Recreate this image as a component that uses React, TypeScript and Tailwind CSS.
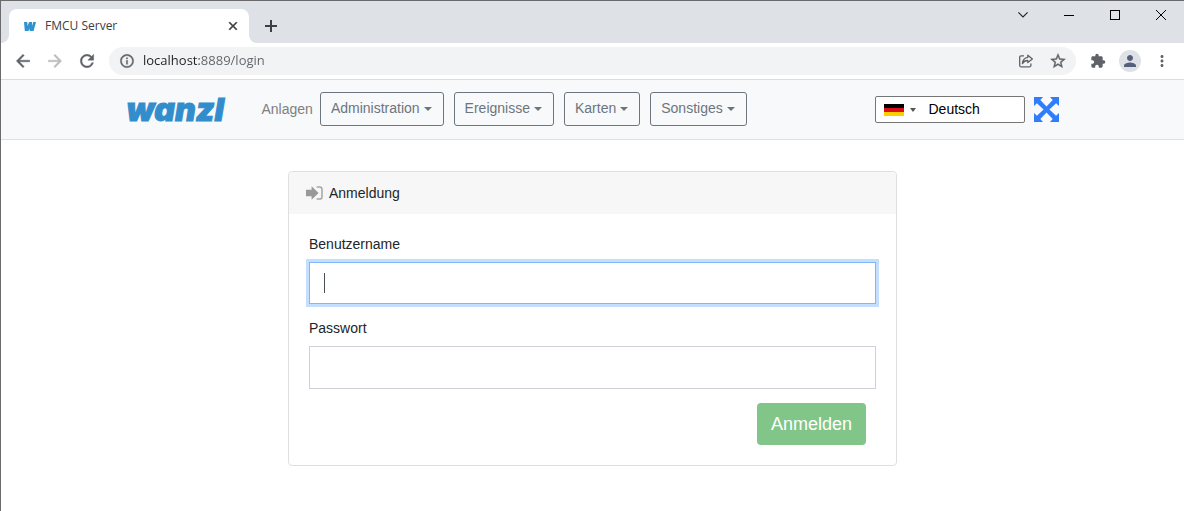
import React from "react";
import {
  MdArrowBack,
  MdArrowForward,
  MdClose,
  MdExtension,
  MdInfoOutline,
  MdMoreVert,
  MdPerson,
  MdRefresh,
  MdStarBorder,
} from "react-icons/md";

const menus = ["Administration", "Ereignisse", "Karten", "Sonstiges"];

function Favicon() {
  return (
    <svg viewBox="0 0 12 9" className="h-[9px] w-3" fill="#2f93cf" aria-hidden="true">
      <path d="M0 0H3.4L3.4 4 5.2 0H8L8 4 9.2 0H12L9.6 9H5.6L5.4 6.4 4.4 9H.8z" />
    </svg>
  );
}

function ShareIcon() {
  return (
    <svg viewBox="0 0 16 16" className="size-4" fill="none" stroke="#5f6368" strokeWidth="1.3" aria-hidden="true">
      <path d="M6 2.8H3.2Q1.7 2.8 1.7 4.3V12.4Q1.7 13.9 3.2 13.9H11.4Q12.9 13.9 12.9 12.4V10.5" />
      <path d="M9.8 2.2 14.4 5.9 9.8 9.6V7.5Q6.2 7.4 4.4 10.6 4.8 5.2 9.8 4.4Z" strokeLinejoin="round" />
    </svg>
  );
}

function TabStrip() {
  return (
    <div className="flex h-[42px] items-start justify-between bg-[#dee1e6]">
      <div className="flex pt-2">
        <div className="flex w-2 items-end self-stretch">
          <svg viewBox="0 0 8 8" className="size-2" fill="#fff" aria-hidden="true">
            <path d="M8 0V8H0A8 8 0 0 0 8 0Z" />
          </svg>
        </div>
        <div className="flex h-[34px] w-60 items-center rounded-t-lg bg-white pr-2 pl-[15px]">
          <Favicon />
          <span className="ml-[9px] flex-1 text-xs text-[#3c4043]">FMCU Server</span>
          <button type="button" aria-label="Tab schließen" className="flex size-4 items-center justify-center">
            <MdClose className="size-[14px] text-[#3c4043] [&>path:last-child]:stroke-1" />
          </button>
        </div>
        <div className="flex w-2 items-end self-stretch">
          <svg viewBox="0 0 8 8" className="size-2" fill="#fff" aria-hidden="true">
            <path d="M0 0V8H8A8 8 0 0 1 0 0Z" />
          </svg>
        </div>
        <button type="button" aria-label="Neuer Tab" className="flex h-[34px] w-7 items-center justify-center">
          <svg viewBox="0 0 12 12" className="size-3" stroke="#3c4043" strokeWidth="2" aria-hidden="true">
            <path d="M6 0V12M0 6H12" />
          </svg>
        </button>
      </div>
      <div className="flex">
        <button type="button" aria-label="Tabs durchsuchen" className="flex h-7 w-[46px] items-center justify-center">
          <svg viewBox="0 0 10 6" className="h-[6px] w-[10px]" fill="none" stroke="#202124" strokeWidth="1.1" aria-hidden="true">
            <path d="M.4 .4 5 5 9.6 .4" />
          </svg>
        </button>
        <button type="button" aria-label="Minimieren" className="flex h-7 w-[46px] items-center justify-center">
          <span className="h-px w-[10px] bg-black" />
        </button>
        <button type="button" aria-label="Maximieren" className="flex h-7 w-[46px] items-center justify-center">
          <span className="size-[10px] border border-black" />
        </button>
        <button type="button" aria-label="Schließen" className="flex h-7 w-[46px] items-center justify-center">
          <svg viewBox="0 0 10 10" className="size-[10px]" stroke="#000" strokeWidth="1" aria-hidden="true">
            <path d="M0 0 10 10M10 0 0 10" />
          </svg>
        </button>
      </div>
    </div>
  );
}

function Toolbar() {
  const button = "flex size-8 items-center justify-center text-[#5f6368]";
  const bold = "[&>path:last-child]:stroke-[0.5]";
  return (
    <div className="flex h-[37px] items-center border-b border-[#dadce0] bg-white px-[6px]">
      <button type="button" aria-label="Zurück" className={button}>
        <MdArrowBack className={`size-5 ${bold}`} />
      </button>
      <button type="button" aria-label="Vorwärts" className={button}>
        <MdArrowForward className={`size-5 text-[#babcbe] ${bold}`} />
      </button>
      <button type="button" aria-label="Neu laden" className={button}>
        <MdRefresh className={`size-5 ${bold}`} />
      </button>
      <div className="mx-[6px] flex h-7 flex-1 items-center rounded-full bg-[#f1f3f4] pr-[2px] pl-[10px]">
        <MdInfoOutline className={`size-4 text-[#5f6368] ${bold}`} />
        <input
          type="text"
          aria-label="Adresse"
          defaultValue="localhost:8889/login"
          className="ml-2 min-w-0 flex-1 bg-linear-to-r from-[#202124] from-[56px] to-[#5f6368] to-[56px] bg-clip-text text-[13px] text-transparent outline-none"
        />
        <button type="button" aria-label="Teilen" className={button}>
          <ShareIcon />
        </button>
        <button type="button" aria-label="Lesezeichen" className={button}>
          <MdStarBorder className={`size-[18px] ${bold}`} />
        </button>
      </div>
      <button type="button" aria-label="Erweiterungen" className={button}>
        <MdExtension className="size-4" />
      </button>
      <button type="button" aria-label="Profil" className={button}>
        <span className="flex size-[22px] items-center justify-center rounded-full bg-[#dee1e6]">
          <MdPerson className="size-[18px] text-[#56607a]" />
        </span>
      </button>
      <button type="button" aria-label="Menü" className={button}>
        <MdMoreVert className="size-[18px]" />
      </button>
    </div>
  );
}

function ExpandIcon() {
  return (
    <svg viewBox="0 0 25 25" className="size-[25px]" fill="#2f7dfb" aria-hidden="true">
      <path d="M0 0H9L6.3 2.9 12.5 9.6 18.7 2.9 16 0H25V9L22.1 6.3 15.4 12.5 22.1 18.7 25 16V25H16L18.7 22.1 12.5 15.4 6.3 22.1 9 25H0V16L2.9 18.7 9.6 12.5 2.9 6.3 0 9Z" />
    </svg>
  );
}

function Navbar() {
  return (
    <nav className="border-b border-[#dee0e6] bg-[#f8f9fb]">
      <div className="mx-auto flex h-[59px] max-w-[932px] items-center">
        <a
          href="#start"
          className="w-[135px] font-['Inter'] text-[32px] leading-8 font-black text-[#328dcc] italic [-webkit-text-stroke:1px_#328dcc]"
        >
          wanzl
        </a>
        <a href="#anlagen" className="text-[#808080]">
          Anlagen
        </a>
        <div className="ml-[7px] flex gap-[10px]">
          {menus.map((name) => (
            <button
              key={name}
              type="button"
              className="mb-[2px] flex h-[34px] items-center rounded-[3px] border border-[#6c757d] pr-[11px] pl-[10px] text-[#6c757d]"
            >
              {name}
              <span className="ml-1 border-x-4 border-t-4 border-x-transparent border-t-[#6c757d]" />
            </button>
          ))}
        </div>
        <div className="ml-auto flex h-[27px] w-[150px] items-center rounded-[2px] border border-[#767676] bg-white">
          <button type="button" aria-label="Sprache wählen" className="flex h-full items-center pr-2 pl-2">
            <svg viewBox="0 0 20 12" className="h-3 w-5" aria-hidden="true">
              <path d="M0 0H20V4H0z" fill="#000" />
              <path d="M0 4H20V8H0z" fill="#d80f14" />
              <path d="M0 8H20V12H0z" fill="#ffce00" />
            </svg>
            <span className="ml-[6px] border-x-[3px] border-t-4 border-x-transparent border-t-[#555]" />
          </button>
          <input
            type="text"
            aria-label="Sprache"
            defaultValue="Deutsch"
            className="ml-[5px] min-w-0 flex-1 bg-transparent text-black outline-none"
          />
        </div>
        <button type="button" aria-label="Vollbild" className="ml-[9px]">
          <ExpandIcon />
        </button>
      </div>
    </nav>
  );
}

function LoginCard() {
  return (
    <section className="mx-auto mt-[31px] max-w-[609px] rounded border border-[#dfdfdf]">
      <header className="flex h-[42px] items-center gap-[6px] rounded-t bg-[#f7f7f7] px-[17px]">
        <svg viewBox="0 0 17 14" className="h-[14px] w-[17px]" aria-hidden="true">
          <path d="M0 3.8H5.6V.2L12.6 7 5.6 13.8V10.2H0Z" fill="#999" />
          <path d="M10.6 .9H13.6Q16 .9 16 3.3V10.7Q16 13.1 13.6 13.1H10.6" fill="none" stroke="#a6a6a6" strokeWidth="1.5" />
        </svg>
        <h1>Anmeldung</h1>
      </header>
      <form className="p-5" onSubmit={(event) => event.preventDefault()}>
        <label htmlFor="username" className="mb-[7px] block">
          Benutzername
        </label>
        <div className="relative mb-[14px]">
          <input
            id="username"
            type="text"
            className="block h-[42px] w-full border border-[#80b7fb] bg-white px-[14px] ring-3 ring-[#c3defe] outline-none"
          />
          <span className="absolute top-[11px] left-[15px] h-5 w-px bg-[#495057]" />
        </div>
        <label htmlFor="password" className="mb-[7px] block">
          Passwort
        </label>
        <input
          id="password"
          type="password"
          className="block h-[43px] w-full border border-[#ced0da] bg-white px-[14px] outline-none"
        />
        <div className="mt-[14px] flex justify-end pr-[10px]">
          <button
            type="submit"
            className="h-[42px] rounded bg-[#81c688] px-[14px] text-lg text-white"
          >
            Anmelden
          </button>
        </div>
      </form>
    </section>
  );
}

export default function App() {
  return (
    <div className="min-h-screen border-t border-l border-[#6b6b6d] bg-white">
      <div className="font-['Open_Sans',sans-serif]">
        <TabStrip />
        <Toolbar />
      </div>
      <div className="font-['Liberation_Sans',Arial,sans-serif] text-sm leading-[21px] text-[#212529]">
        <Navbar />
        <main>
          <LoginCard />
        </main>
      </div>
    </div>
  );
}
